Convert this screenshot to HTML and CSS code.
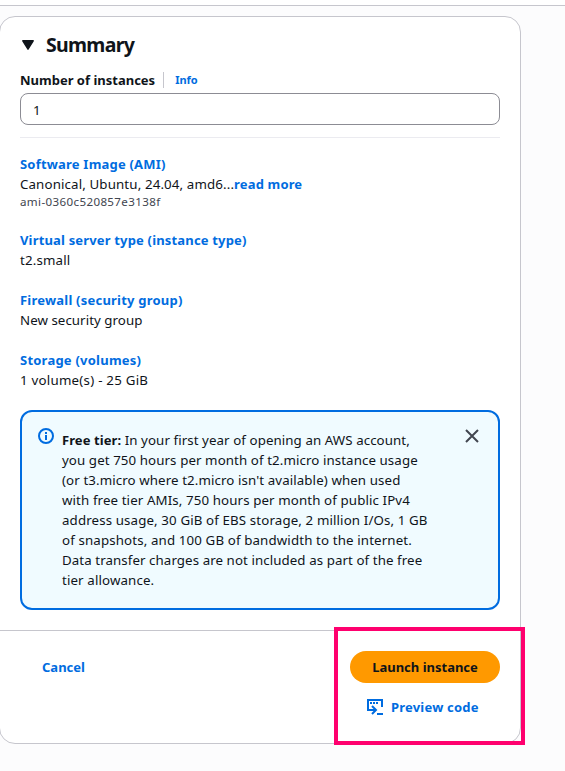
FILE: index.html
```html
<!DOCTYPE html>
<html lang="en">
<head>
<meta charset="utf-8">
<title>Summary</title>
<link rel="stylesheet" href="styles.css">
</head>
<body>
<div class="topbar"></div>
<main class="card">
  <section class="content">
    <h2 class="title"><svg class="caret" width="12" height="10" viewBox="0 0 12 10"><path d="M.8.8h10.4L6 9.2z" fill="#0f141a" stroke="#0f141a" stroke-width="1.4" stroke-linejoin="round"/></svg><span class="title-text">Summary</span></h2>
    <div class="label-row"><label class="label" for="count">Number of instances</label><a class="info">Info</a></div>
    <input class="field" id="count" type="text" value="1">
    <hr class="rule">
    <dl class="details">
      <div class="item ami"><dt><a class="t-ami">Software Image (AMI)</a></dt><dd><span class="t-canon">Canonical, Ubuntu, 24.04, amd6...</span><a class="t-more">read more</a></dd><dd class="small"><span class="t-id">ami-0360c520857e3138f</span></dd></div>
      <div class="item"><dt><a class="t-type">Virtual server type (instance type)</a></dt><dd><span class="t-small">t2.small</span></dd></div>
      <div class="item"><dt><a class="t-fire">Firewall (security group)</a></dt><dd><span class="t-new">New security group</span></dd></div>
      <div class="item"><dt><a class="t-stor">Storage (volumes)</a></dt><dd><span class="t-vol">1 volume(s) - 25 GiB</span></dd></div>
    </dl>
    <div class="alert">
      <svg class="info-icon" width="16" height="16" viewBox="0 0 16 16" fill="none" stroke="#006ce0" stroke-width="2"><circle cx="8" cy="8" r="7"/><path d="M8 4v2M8 7v5" stroke-width="2"/></svg>
      <p class="alert-text"><span class="l1"><b>Free tier:</b> In your first year of opening an AWS account,</span><br><span class="l2">you get 750 hours per month of t2.micro instance usage</span><br><span class="l3">(or t3.micro where t2.micro isn't available) when used</span><br><span class="l4">with free tier AMIs, 750 hours per month of public IPv4</span><br><span class="l5">address usage, 30 GiB of EBS storage, 2 million I/Os, 1 GB</span><br><span class="l6">of snapshots, and 100 GB of bandwidth to the internet.</span><br><span class="l7">Data transfer charges are not included as part of the free</span><br><span class="l8">tier allowance.</span></p>
      <svg class="close" width="16" height="16" viewBox="0 0 16 16" fill="none" stroke="#424650" stroke-width="2"><path d="m2 2 12 12M14 2 2 14"/></svg>
    </div>
  </section>
  <footer class="footer">
    <a class="cancel">Cancel</a>
    <div class="actions">
      <button class="launch"><span class="t-launch">Launch instance</span></button>
      <a class="preview"><svg width="16" height="16" viewBox="0 0 16 16" fill="none" stroke="#006ce0" stroke-width="2"><path d="M15 8V1H1v10h7"/><path d="M5 7l4 4-4 4M10 15h6"/><path d="M3 4h2M6 4h2M9 4h2"/></svg><span class="t-preview">Preview code</span></a>
    </div>
  </footer>
  <div class="highlight"></div>
</main>
</body>
</html>
```
FILE: styles.css
```css
* { box-sizing: border-box; }
body { margin: 0; height: 771px; overflow: hidden; background: #fcfcfd; color: #0f141a; font: 13.3px/20px "Noto Sans", sans-serif; }
a { color: #006ce0; font-weight: 700; font-size: 13px; }
b { font-size: 13px; }
.topbar { height: 6px; background: #fff; border-bottom: 1px solid #c6c6cd; }
.card { position: relative; width: 522px; height: 728px; margin: 10px 0 0 -1px; background: #fff; border: 1px solid #c6c6cd; border-radius: 16px; }
.content { height: 613px; padding: 16px 20px 0; }
.title { display: flex; align-items: center; height: 24px; margin: 0; padding-left: 2px; gap: 12px; font-size: 19.5px; line-height: 24px; }
.title-text { letter-spacing: -.7px; }
.label-row { display: flex; align-items: center; height: 20px; margin-top: 13px; }
.label { font-weight: 700; font-size: 13px; }
.info { margin-left: 8px; padding-left: 11px; border-left: 1px solid #c6c6cd; font-size: 11px; line-height: 16px; }
.field { display: block; width: 480px; height: 32px; margin: 3px 0 0; padding: 2px 12px 0; border: 1px solid #8c8c94; border-radius: 8px; background: #fff; color: #0f141a; font: inherit; }
.rule { height: 1px; margin: 12px 0 0; border: 0; background: #ebebf0; }
.details { margin: 16px 0 0; }
.item { height: 60px; }
.item.ami { height: 76px; }
dd { margin: 0; }
.small { font-size: 11.6px; line-height: 16px; color: #424650; }
.t-ami { letter-spacing: .2px; }
.t-canon { letter-spacing: .13px; }
.t-more { letter-spacing: .15px; }
.t-id { letter-spacing: .36px; }
.t-type { letter-spacing: .17px; }
.t-small { letter-spacing: .15px; }
.t-fire { letter-spacing: .22px; }
.t-new { letter-spacing: .05px; }
.t-stor { letter-spacing: .23px; }
.t-vol { letter-spacing: .24px; }
.t-preview { letter-spacing: .2px; }
.alert { display: flex; width: 480px; height: 200px; padding: 16px; border: 2px solid #006ce0; border-radius: 12px; background: #f0fbff; }
.info-icon { flex: none; }
.alert-text { flex: 1; margin: 2px 0 0 8px; white-space: nowrap; }
.l1 { letter-spacing: .08px; }
.l2 { letter-spacing: .09px; }
.l3 { letter-spacing: .1px; }
.l4 { letter-spacing: .11px; }
.l5 { letter-spacing: .125px; }
.l6 { letter-spacing: .13px; }
.l7 { letter-spacing: .08px; }
.l8 { letter-spacing: .13px; }
.close { flex: none; margin-right: 2px; }
.footer { display: flex; justify-content: space-between; align-items: flex-start; height: 113px; padding: 20px 20px 0 42px; border-top: 1px solid #c6c6cd; }
.cancel { margin-top: 6px; }
.actions { width: 150px; }
.launch { display: block; width: 150px; height: 32px; padding: 0; border: 0; border-radius: 16px; background: #ff9900; color: #0f141a; font: inherit; font-weight: 700; font-size: 13px; }
.preview { display: flex; align-items: center; height: 20px; margin: 14px 0 0 17px; gap: 8px; white-space: nowrap; }
.highlight { position: absolute; left: 334px; top: 610px; width: 191px; height: 118px; border: 4px solid #ff006e; }
```
